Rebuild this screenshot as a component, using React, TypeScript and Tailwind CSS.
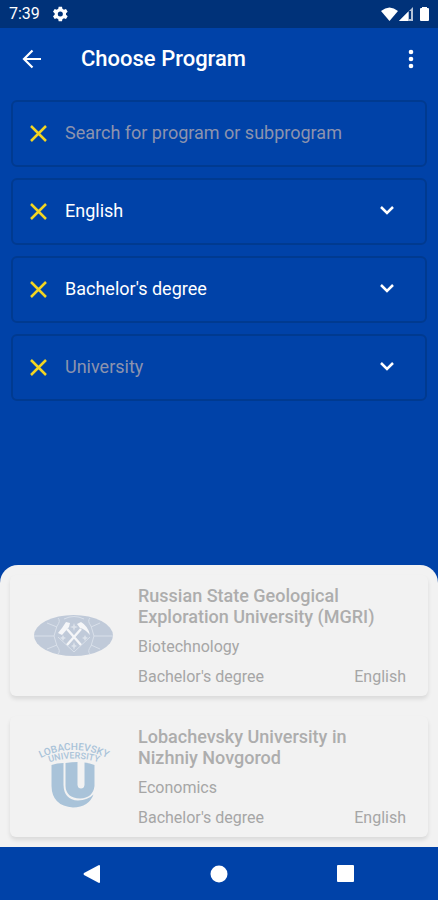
import type { ReactNode } from 'react'

type Program = {
  university: string
  subject: string
  degree: string
  language: string
  logo: ReactNode
}

type FieldProps = { label: string; children: ReactNode }

type SelectFieldProps = {
  label: string
  options: string[]
  empty?: boolean
}

function MgriLogo() {
  return (
    <svg viewBox="0 0 80 42" className="h-[42px] w-20 shrink-0" aria-hidden="true">
      <ellipse cx="39.5" cy="20.5" rx="39.5" ry="20.5" fill="#c0cad9" />
      <g fill="none" stroke="#d9e0ea" strokeWidth="1">
        <path d="M0 21H20M60 21H79M13 8 23 12M66 8 57 12M13 34 23 30M66 34 57 30" />
        <path d="M24 3Q27 6 23 11L20 21 23 31Q27 36 24 39M56 3Q53 6 57 11L60 21 57 31Q53 36 56 39" />
        <path d="M30 4Q40 -1 50 4M24 22 40 37 56 22" />
      </g>
      <g fill="#dde3eb">
        <path d="m40 8 1 3 3 1-3 1-1 3-1-3-3-1 3-1zM40 27l1 3 2 1-2 1-1 3-1-3-2-1 2-1zM29 20l1 2 2 1-2 1-1 2-1-2-2-1 2-1zM51 20l1 2 2 1-2 1-1 2-1-2-2-1 2-1z" />
      </g>
      <path d="M33 14 47 30M47 14 33 30" fill="none" stroke="#f5f6f8" strokeWidth="2.4" />
      <path d="M32 7 36 8 35 12 28 20 24 18 28 13Z" fill="#f5f6f8" />
      <path d="M43 9 47 7Q54 11 56 20Q51 14 46 13Z" fill="#f5f6f8" />
    </svg>
  )
}

function LobachevskyLogo() {
  return (
    <svg viewBox="0 0 80 68" className="h-[68px] w-20 shrink-0 overflow-visible" aria-hidden="true">
      <defs>
        <path id="arc-outer" d="M3 17Q40 -3 77 17" />
        <path id="arc-inner" d="M8 22Q40 9 72 22" />
      </defs>
      <g
        fill="#a9c3d9"
        fontFamily="Roboto, 'Liberation Sans', sans-serif"
        fontWeight="500"
        textAnchor="middle"
      >
        <text fontSize="10">
          <textPath href="#arc-outer" startOffset="50%">
            LOBACHEVSKY
          </textPath>
        </text>
        <text fontSize="9">
          <textPath href="#arc-inner" startOffset="50%">
            UNIVERSITY
          </textPath>
        </text>
      </g>
      <path
        fill="#a9c3d9"
        d="M17.5 22Q23 20 29.5 20V42Q30 57 44 57.5 54 57 59.5 51.5 55 64 39 64.5 18 63 17.5 43Z"
      />
      <path
        fill="#a9c3d9"
        d="M31.5 20Q38 19 43.5 19V42Q44 45.5 47 45.5T50.5 42V19.5Q56 20 60.5 22V43Q59 55 46 55.5 32 55 31.5 43Z"
      />
    </svg>
  )
}

const PROGRAMS: Program[] = [
  {
    university: 'Russian State Geological Exploration University (MGRI)',
    subject: 'Biotechnology',
    degree: "Bachelor's degree",
    language: 'English',
    logo: <MgriLogo />,
  },
  {
    university: 'Lobachevsky University in Nizhniy Novgorod',
    subject: 'Economics',
    degree: "Bachelor's degree",
    language: 'English',
    logo: <LobachevskyLogo />,
  },
]

function StatusBar() {
  return (
    <div className="flex h-7 items-center justify-between bg-[#003279] pr-2 pl-[9px]">
      <div className="flex items-center gap-3">
        <span className="text-base leading-5">7:39</span>
        <svg viewBox="0 0 24 24" className="size-4" fill="currentColor" aria-hidden="true">
          <path
            fillRule="evenodd"
            d="m10 1-.6 3.2-2.3 1.3L4 4.4 1.5 8.7 4 10.8v2.4l-2.5 2.1L4 19.6l3.1-1.1 2.3 1.3.6 3.2h5l.6-3.2 2.3-1.3 3.1 1.1 2.5-4.3-2.5-2.1v-2.4l2.5-2.1L21 4.4l-3.1 1.1-2.3-1.3L15 1zm2.5 7.2a3.8 3.8 0 1 1 0 7.6 3.8 3.8 0 0 1 0-7.6z"
          />
        </svg>
      </div>
      <svg viewBox="0 0 50 16" className="h-4 w-[50px]" fill="currentColor" aria-hidden="true">
        <path d="M1 5Q9.5 -2 18 5L9.5 15Z" />
        <path d="M33 1V15H19Z" opacity=".7" />
        <path d="M28 6V15H19Z" />
        <path d="M29 5h2v8h-2z" fill="#003279" />
        <path d="M42 1h5v1h1q1 0 1 1v11q0 1-1 1h-7q-1 0-1-1V3q0-1 1-1h1z" />
      </svg>
    </div>
  )
}

function AppBar() {
  return (
    <header className="flex h-[62px] items-center px-5">
      <button type="button" aria-label="Back">
        <svg viewBox="0 0 24 24" className="size-6" fill="none" stroke="currentColor" strokeWidth="2.2" aria-hidden="true">
          <path d="M21 12H5M12.5 3.5 4 12l8.5 8.5" />
        </svg>
      </button>
      <h1 className="ml-[37px] flex-1 text-[22px] leading-7 font-medium">Choose Program</h1>
      <button type="button" aria-label="More options" className="-mr-1">
        <svg viewBox="0 0 24 24" className="size-6" fill="currentColor" aria-hidden="true">
          <circle cx="13" cy="5" r="2.3" />
          <circle cx="13" cy="12" r="2.3" />
          <circle cx="13" cy="19" r="2.3" />
        </svg>
      </button>
    </header>
  )
}

function Field({ label, children }: FieldProps) {
  return (
    <div className="flex h-[67px] items-center rounded-md border-2 border-[#003a90] pr-7 pb-0.5 pl-4">
      <button type="button" aria-label={`Clear ${label}`} className="text-[#f2d522]">
        <svg viewBox="0 0 20 20" className="size-5" fill="none" stroke="currentColor" strokeWidth="2.5" aria-hidden="true">
          <path d="M2 3 17 18M17 3 2 18" />
        </svg>
      </button>
      {children}
    </div>
  )
}

function SelectField({ label, options, empty }: SelectFieldProps) {
  return (
    <Field label={label}>
      <select
        aria-label={label}
        className={
          empty
            ? 'ml-4 h-10 min-w-0 flex-1 appearance-none bg-transparent text-lg text-[#8c93ae] outline-none'
            : 'ml-4 h-10 min-w-0 flex-1 appearance-none bg-transparent text-lg outline-none'
        }
      >
        {options.map((option) => (
          <option key={option}>{option}</option>
        ))}
      </select>
      <svg viewBox="0 0 20 20" className="size-5 shrink-0" fill="none" stroke="currentColor" strokeWidth="2.5" aria-hidden="true">
        <path d="m4 6 6 6 6-6" />
      </svg>
    </Field>
  )
}

function ProgramCard({ university, subject, degree, language, logo }: Program) {
  return (
    <li className="flex items-center gap-6 rounded-md bg-[#f2f2f2] pt-[10px] pr-[22px] pb-[9px] pl-6 shadow-[0_3px_4px_rgba(0,0,0,0.1)]">
      {logo}
      <div className="min-w-0 flex-1 text-base leading-5 text-[#a6a6a6]">
        <h2 className="max-w-60 text-lg leading-[21px] font-medium text-[#adadad]">{university}</h2>
        <p className="mt-[10px]">{subject}</p>
        <div className="mt-[10px] flex justify-between">
          <span>{degree}</span>
          <span>{language}</span>
        </div>
      </div>
    </li>
  )
}

function NavigationBar() {
  return (
    <nav className="flex h-[53px] items-center justify-between bg-[#0042a8] px-[82px]">
      <button type="button" aria-label="System back">
        <svg viewBox="0 0 20 20" className="size-5" fill="currentColor" aria-hidden="true">
          <path d="M17 1Q18 1 18 2V18Q18 19 17 19L2 11Q1 10 2 9Z" />
        </svg>
      </button>
      <button type="button" aria-label="Home">
        <svg viewBox="0 0 20 20" className="size-5" fill="currentColor" aria-hidden="true">
          <circle cx="10" cy="10" r="8.5" />
        </svg>
      </button>
      <button type="button" aria-label="Recent apps">
        <svg viewBox="0 0 20 20" className="size-5" fill="currentColor" aria-hidden="true">
          <rect x="1" y="1" width="17" height="17" rx="1" />
        </svg>
      </button>
    </nav>
  )
}

export default function App() {
  return (
    <div className="flex min-h-screen flex-col bg-[#0042a8] font-['Roboto','Liberation_Sans',sans-serif] text-white">
      <StatusBar />
      <AppBar />
      <form className="flex flex-col gap-[11px] px-[11px] pt-[10px]">
        <Field label="Search">
          <input
            type="text"
            aria-label="Search"
            placeholder="Search for program or subprogram"
            className="ml-4 h-10 min-w-0 flex-1 bg-transparent text-lg outline-none placeholder:text-[#8c93ae]"
          />
        </Field>
        <SelectField label="Language" options={['English', 'Russian']} />
        <SelectField label="Degree" options={["Bachelor's degree", "Master's degree"]} />
        <SelectField label="University" options={['University']} empty />
      </form>
      <main className="mt-auto rounded-t-[18px] bg-[#f2f2f2] px-[10px] py-[10px]">
        <ul className="flex flex-col gap-5">
          {PROGRAMS.map((program) => (
            <ProgramCard key={program.university} {...program} />
          ))}
        </ul>
      </main>
      <NavigationBar />
    </div>
  )
}
